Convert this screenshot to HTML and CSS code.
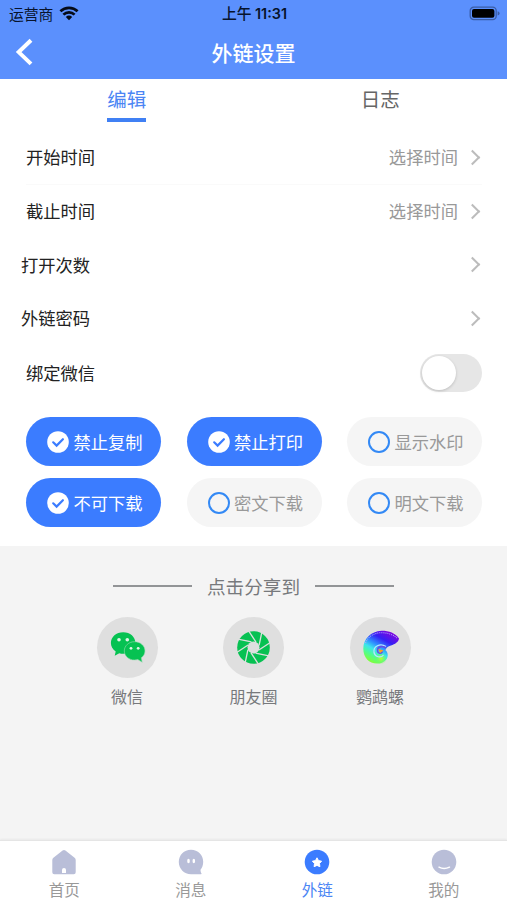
FILE: index.html
```html
<!DOCTYPE html>
<html lang="zh-CN">
<head>
<meta charset="utf-8">
<title>外链设置</title>
<link rel="stylesheet" href="styles.css">
</head>
<body>
<div class="app">
  <header class="header">
    <div class="status">
      <span class="carrier">运营商
        <svg width="20" height="15" viewBox="0 0 20 15" fill="none" stroke="#050b18" stroke-width="2.7"><path d="M1.4 5.3a12.4 12.4 0 0 1 17.2 0M4.400 8.600a8 8 0 0 1 11.200 0"/><path d="M10 14.300 6.800 11a4.700 4.700 0 0 1 6.400 0z" fill="#050b18" stroke="none"/></svg>
      </span>
      <span class="clock">上午 <b>11:31</b></span>
      <svg class="battery" width="31" height="15" viewBox="0 0 31 15"><rect x="1.200" y="1.200" width="26" height="12.400" rx="3.600" fill="none" stroke="#3b5da6" stroke-width="1.300"/><rect x="3" y="3" width="22.400" height="8.800" rx="2" fill="#000"/><path d="M28.600 5.200q2 .6 2 2.200t-2 2.200z" fill="#3b5da6"/></svg>
    </div>
    <div class="titlebar">
      <svg class="back" width="20" height="30" viewBox="0 0 20 30" fill="none" stroke="#fff" stroke-width="4"><path d="M17 3.300 4.700 15.100 17 26.900"/></svg>
      <h1>外链设置</h1>
    </div>
  </header>

  <main class="panel">
    <nav class="tabs">
      <span class="tab active">编辑</span>
      <span class="tab">日志</span>
    </nav>
    <div class="rows">
      <div class="row lined"><span>开始时间</span><span class="value">选择时间<i class="chev"></i></span></div>
      <div class="row"><span>截止时间</span><span class="value">选择时间<i class="chev"></i></span></div>
      <div class="row outdent"><span>打开次数</span><span class="value"><i class="chev"></i></span></div>
      <div class="row outdent"><span>外链密码</span><span class="value"><i class="chev"></i></span></div>
      <div class="row last"><span>绑定微信</span><span class="switch"></span></div>
    </div>
    <div class="options">
      <div class="chip on"><svg class="mark" viewBox="0 0 22 22"><circle cx="11" cy="11" r="10.800"/><path d="m6.200 11.300 3.400 3.300 6.300-6.400"/></svg>禁止复制</div>
      <div class="chip on"><svg class="mark" viewBox="0 0 22 22"><circle cx="11" cy="11" r="10.800"/><path d="m6.200 11.300 3.400 3.300 6.300-6.400"/></svg>禁止打印</div>
      <div class="chip"><i class="ring"></i>显示水印</div>
      <div class="chip on"><svg class="mark" viewBox="0 0 22 22"><circle cx="11" cy="11" r="10.800"/><path d="m6.200 11.300 3.400 3.300 6.300-6.400"/></svg>不可下载</div>
      <div class="chip"><i class="ring"></i>密文下载</div>
      <div class="chip"><i class="ring"></i>明文下载</div>
    </div>
  </main>

  <section class="share">
    <div class="share-title">点击分享到</div>
    <div class="targets">
      <div class="target">
        <div class="disc">
          <svg width="61" height="61" viewBox="0 0 61 61">
            <path fill="#06c252" d="M26.200 15.300c7 0 12.200 4.700 12.200 10.700S33.200 36.800 26.200 36.800c-1.500 0-2.700-.2-3.900-.6l-4.600 2.600 1-4.300c-3-2-4.800-5-4.800-8.500 0-6 5.300-10.700 12.300-10.700z"/>
            <path fill="#06c252" stroke="#9fdcb6" stroke-width=".6" d="M37.600 24.700c5.800 0 10.400 4 10.400 9.200 0 2.900-1.500 5.300-3.700 6.900l.9 4.400-4.400-2.600c-1 .3-2 .4-3.200.4-5.800 0-10.300-4-10.300-9.100s4.500-9.200 10.300-9.200z"/>
            <g fill="#dff5e6"><circle cx="22" cy="22.800" r="1.800"/><circle cx="30.300" cy="22.800" r="1.800"/><circle cx="34" cy="31.300" r="1.400"/><circle cx="41.200" cy="31.300" r="1.400"/></g>
          </svg>
        </div>
        <span>微信</span>
      </div>
      <div class="target">
        <div class="disc">
          <svg width="61" height="61" viewBox="-30.500 -30.500 61 61">
            <circle r="16.300" fill="#07c152"/>
            <circle r="6" fill="#dfdfdf"/>
            <g stroke="#dfdfdf" stroke-width="1.300">
              <path id="blade" d="M2.500-5.400-5-16.800"/>
              <use href="#blade" transform="rotate(45)"/><use href="#blade" transform="rotate(90)"/><use href="#blade" transform="rotate(135)"/><use href="#blade" transform="rotate(180)"/><use href="#blade" transform="rotate(225)"/><use href="#blade" transform="rotate(270)"/><use href="#blade" transform="rotate(315)"/>
            </g>
          </svg>
        </div>
        <span>朋友圈</span>
      </div>
      <div class="target">
        <div class="disc">
          <svg width="61" height="61" viewBox="0 0 61 61">
            <defs>
              <linearGradient id="shell" gradientUnits="userSpaceOnUse" x1="25" y1="47" x2="42" y2="17"><stop offset="0" stop-color="#7dff3c"/><stop offset=".2" stop-color="#4dfb98"/><stop offset=".36" stop-color="#3ce4ee"/><stop offset=".52" stop-color="#2f8dff"/><stop offset=".74" stop-color="#3520f5"/><stop offset="1" stop-color="#7a08e0"/></linearGradient>
              <radialGradient id="lime"><stop offset="0" stop-color="#c0ff30"/><stop offset="1" stop-color="#6dff50" stop-opacity="0"/></radialGradient>
            </defs>
            <path fill="url(#shell)" d="M49 21.500C45.500 16 38.500 13.700 31.500 13.800 21 14.300 13.300 22 13.300 31.500c0 9 5.700 15 13.700 15 6.500 0 10.700-3.800 10.700-8.300 0-2.400-.8-4-2.300-5 .6-2.300 2.600-3.700 5.600-4.700 4-1.300 7.500-3.500 8-7z"/>
            <circle cx="31" cy="41.500" r="6" fill="url(#lime)"/>
            <path d="M15.500 26c3-7 9-10.300 16-10.300 6 0 11 1.500 15.500 5.300" fill="none" stroke="#aaa5ff" stroke-width="1.100" stroke-dasharray="1 1"/>
            <path d="M36 29.500c-6-4-13 0-12 6 1 4.500 7 6 9.500 2.500" fill="none" stroke="#b9e3ff" stroke-width="1.200"/>
            <path d="M36 31c-4-3-9-1-8.500 3 .5 3 4 3 5 .5" fill="none" stroke="#6a4be0" stroke-width="1.600"/>
            <path d="M28.500 32l5 1.500-3.500 2.500z" fill="#ff9c18"/>
          </svg>
        </div>
        <span>鹦鹉螺</span>
      </div>
    </div>
  </section>

  <footer class="tabbar">
    <div class="item">
      <svg width="26" height="26" viewBox="0 0 26 26"><path fill="#b9bed8" d="M11.600 1.500q1.400-1.200 2.800 0l9.200 7.300q1.100.9 1.100 2.200v12.200q0 2-2 2H3.300q-2 0-2-2V11q0-1.300 1.100-2.200z"/><path fill="#fff" d="M11 24v-3a2 2 0 0 1 4 0v3z"/></svg>
      <span>首页</span>
    </div>
    <div class="item">
      <svg width="26" height="26" viewBox="0 0 26 26"><path fill="#b9bed8" d="M13 .8c7 0 12.200 5.300 12.200 12 0 3.700-1.200 6-2.700 8 0 1.400.4 2.800 1 3.600q.5.800-.7.800H13C6.200 25.200.8 19.800.8 13S6 .8 13 .8z"/><g fill="#fff"><ellipse cx="10.500" cy="12" rx="1.300" ry="2.200"/><ellipse cx="15.800" cy="12" rx="1.300" ry="2.200"/></g></svg>
      <span>消息</span>
    </div>
    <div class="item current">
      <svg width="26" height="26" viewBox="0 0 26 26"><circle cx="13" cy="13" r="12.300" fill="#3b7cff"/><path fill="#fff" stroke="#fff" stroke-width="1" stroke-linejoin="round" d="m13 8.800 1.500 2.800 3.100.6-2.100 2.300.4 3.200-2.900-1.300-2.900 1.300.4-3.200-2.100-2.300 3.100-.6z"/></svg>
      <span>外链</span>
    </div>
    <div class="item">
      <svg width="26" height="26" viewBox="0 0 26 26"><circle cx="13" cy="13" r="12.300" fill="#b9bed8"/><path d="M8 18.200q5 2.700 10.500 0" fill="none" stroke="#fff" stroke-width="1.500" stroke-linecap="round"/></svg>
      <span>我的</span>
    </div>
  </footer>
</div>
</body>
</html>
```

FILE: styles.css
```css
* { box-sizing: border-box; }

body {
  margin: 0;
  font-family: "Noto Sans CJK SC", sans-serif;
  color: #222;
}

svg { display: block; flex: none; }

.app {
  width: 507px;
  height: 900px;
  display: flex;
  flex-direction: column;
  background: #f4f4f4;
  overflow: hidden;
}

.header { height: 79px; background: #5b90fd; }

.status {
  height: 26px;
  padding: 0 7px 0 9px;
  display: grid;
  grid-template-columns: 1fr auto 1fr;
  align-items: center;
  font-size: 14.800px;
  line-height: 26px;
  color: #07132c;
}

.carrier { display: flex; align-items: center; gap: 6px; }
.clock b { font-family: Inter, sans-serif; font-weight: 600; font-size: 14.400px; }
.clock { font-weight: 500; }
.battery { justify-self: end; }

.titlebar {
  height: 52px;
  padding: 0 14px;
  display: grid;
  grid-template-columns: 1fr auto 1fr;
  align-items: center;
}

.titlebar h1 {
  margin: 0;
  font-size: 21px;
  line-height: 50px;
  font-weight: 500;
  color: #fff;
}

.panel { height: 467px; background: #fff; }

.tabs { height: 52px; display: flex; justify-content: space-around; }

.tab {
  height: 43px;
  font-size: 19.500px;
  line-height: 39px;
  color: #666;
}

.tab.active { color: #4b85f4; border-bottom: 4px solid #4080f4; }

.rows { padding: 0 25px 0 26px; }

.row {
  height: 53.500px;
  display: flex;
  align-items: center;
  justify-content: space-between;
  font-size: 17.300px;
  line-height: 26px;
}

.lined { border-bottom: 1px solid #fafafa; }
.outdent { margin-left: -5px; }
.last { height: 55px; }

.value { display: flex; align-items: center; gap: 9px; color: #999; }

.chev {
  width: 11px;
  height: 11px;
  margin-right: 4px;
  border: solid #bcbcbc;
  border-width: 2px 2px 0 0;
  transform: rotate(45deg);
}

.switch {
  width: 62px;
  height: 38px;
  border-radius: 19px;
  background: #e6e6e6;
  padding: 2px;
}

.switch::before {
  content: "";
  display: block;
  width: 34px;
  height: 34px;
  border-radius: 50%;
  background: #fff;
  box-shadow: 0 1px 3px rgba(0, 0, 0, .18);
}

.options {
  padding: 17px 25px 0 26px;
  display: grid;
  grid-template-columns: repeat(3, 135px);
  justify-content: space-between;
  row-gap: 12px;
}

.chip {
  height: 49px;
  border-radius: 25px;
  display: flex;
  align-items: center;
  padding-left: 21px;
  gap: 4.500px;
  font-size: 17.300px;
  background: #f5f5f5;
  color: #999;
}

.chip.on { background: #3b7cff; color: #fff; }

.mark { width: 22px; height: 22px; fill: #fff; }
.mark path { fill: none; stroke: #3b7cff; stroke-width: 2.200; stroke-linecap: round; }

.ring { width: 22px; height: 22px; border: 2px solid #3389f5; border-radius: 50%; }

.share { flex: 1; padding-top: 25px; color: #77797c; }

.share-title {
  display: flex;
  align-items: center;
  justify-content: center;
  gap: 15px;
  font-size: 18.600px;
  line-height: 29px;
}

.share-title::before,
.share-title::after { content: ""; width: 79px; height: 2px; background: #929496; }

.targets { display: flex; justify-content: center; margin-top: 17px; }

.target {
  width: 126.500px;
  display: flex;
  flex-direction: column;
  align-items: center;
  font-size: 16px;
  line-height: 24px;
  gap: 6px;
}

.disc { width: 61px; height: 61px; border-radius: 50%; background: #dfdfdf; }

.tabbar {
  height: 60px;
  padding-left: 1px;
  display: flex;
  background: #fff;
  border-top: 1px solid #e5e5e5;
  box-shadow: 0 -1px 2px rgba(0, 0, 0, .05);
}

.item {
  flex: 1;
  padding-top: 8px;
  display: flex;
  flex-direction: column;
  align-items: center;
  gap: 3px;
  font-size: 15.600px;
  line-height: 23px;
  color: #999;
}

.current { color: #4b85f4; }
```
